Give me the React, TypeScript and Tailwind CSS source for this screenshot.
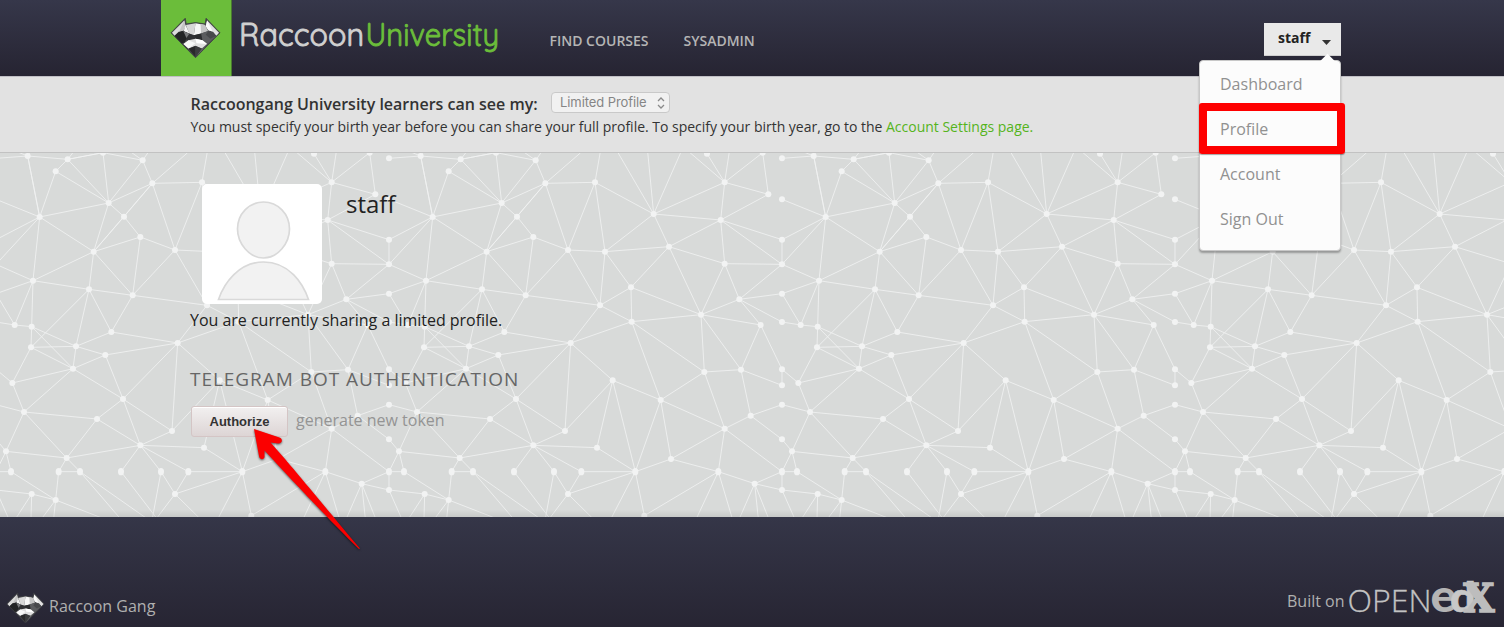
import React from "react";

/* Mesh nodes of one background tile, three units per pixel. */
const NODES: Record<string, [number, number]> = {
  a: [92, 18], b: [212, 28], c: [318, 8], d: [437, 31], e: [176, 64], f: [335, 159],
  g: [466, 100], h: [615, 97], i: [128, 201], j: [381, 200], k: [430, 261], l: [290, 305],
  m: [534, 300], n: [645, 305], o: [791, 192], p: [837, 290], q: [992, 210], r: [1004, 97],
  s: [1135, 133], t: [1176, 148], u: [1176, 25], v: [1118, 8], w: [951, 11], x: [1176, 269],
  y: [1176, 343], z: [1004, 341], A: [723, 412], B: [630, 466], C: [407, 436], D: [276, 418],
  E: [108, 392], F: [725, 515], G: [933, 494], H: [1048, 448], I: [1176, 431], J: [1176, 516],
  K: [1112, 525], L: [53, 525], M: [104, 530], N: [102, 592], O: [237, 589], P: [343, 546],
  Q: [325, 615], R: [228, 656], S: [542, 579], T: [668, 691], U: [812, 750], V: [943, 666],
  W: [1053, 659], X: [1176, 658], Y: [1176, 706], Z: [1176, 764], AA: [1082, 797],
  AB: [1004, 836], AC: [1176, 868], AD: [378, 747], AE: [300, 807], AF: [81, 786],
  AG: [46, 699], AH: [525, 843], AI: [621, 893], AJ: [430, 886], AK: [209, 924], AL: [27, 904],
  AM: [42, 965], AN: [185, 965], AO: [249, 965], AP: [372, 965], AQ: [492, 965],
  AR: [574, 965], AS: [736, 965], AT: [843, 927], AU: [985, 965], AV: [1176, 965],
  AW: [1094, 1001], AX: [1176, 1020], AY: [534, 1032], AZ: [104, 1032], BA: [176, 1050],
  BB: [763, 1097],
};

/* Chains of nodes; "<" marks a node of the tile to the left. */
const CHAINS = [
  "u< a b c", "d g h", "a i e b f", "e f g", "c b", "i f l i", "t< i", "x< i", "y< i", "i E l",
  "f j k m n p z y", "g j", "j l k", "g l", "g m C l", "k C", "h m", "h n B", "n A", "h o",
  "o r v", "w r s", "r q s", "o q x", "q y", "q z", "o p q", "x y", "c f", "d f", "o n",
  "p A G p", "B m", "A B F G H I", "A F", "z G", "z H y", "H J", "H K G", "G W V G", "K W",
  "K X Y", "E D C B S F", "y< E", "I< E L", "E M", "l D", "D N", "D P C", "D O R Q S P O Q",
  "Q AD S", "S T U F V U", "M O N R AD", "AF AE AD", "M N AG R", "M R", "I< L M", "J< L",
  "AG AF AL AK AJ AI AS", "X< AG", "Z< AF AK AE AJ AD AH AJ", "AF R", "S AH T AS U AT AS", "T AI",
  "U AB AT AU AB V", "W AA AB AV", "W Y", "AA Z", "AA AC", "AC< AL AM AV<", "AK AN AO AK", "AN BA",
  "AJ AP", "AJ AQ AY", "AJ AR AY AS AR", "AU AW AV AX AW", "AX< AZ BA", "AU BB", "AL AV<", "AM BA",
];

const OUTER =
  "M92 18L100 5M92 18L60 5M212 28L230 5M437 31L400 5M437 31L455 5M466 100L572 8M615 97L631 5M791 192L684 8M791 192L773 5M791 192L872 8M1004 97L900 8M1004 97L1018 5M1118 8L1150 0M1118 8L1135 133M92 18L128 201M437 31L318 8M176 1050L320 1106M176 1050L170 1106M176 1050L134 1106M104 1032L102 1106M104 1032L56 1106M249 965L370 1106M249 965L450 1106M372 965L480 1106M492 965L466 1106M534 1032L478 1106M534 1032L609 1106M736 965L663 1106M736 965L763 1097M985 965L919 1106M985 965L1027 1106M1094 1001L1048 1106M1094 1001L1105 1106M1094 1001L1136 1106M-3 1020L35 1106";

function chainPath(chain: string) {
  return chain
    .split(" ")
    .map((key, index) => {
      const left = key.endsWith("<");
      const [px, py] = NODES[left ? key.slice(0, -1) : key];
      return `${index ? "L" : "M"}${left ? px - 1179 : px} ${py}`;
    })
    .join("");
}

const MESH = CHAINS.map(chainPath).join("") + OUTER;

function MeshBackground() {
  return (
    <svg className="absolute inset-0 size-full" viewBox="0 153 1504 364" preserveAspectRatio="none">
      <defs>
        <g id="tile">
          <path d={MESH} fill="none" stroke="#f0f1f1" strokeWidth="2.600" />
          {Object.entries(NODES).map(([key, [cx, cy]]) => (
            <ellipse key={key} cx={cx} cy={cy} rx="9" ry={cy === 965 ? 11 : 9} fill="#f2f3f3" />
          ))}
        </g>
      </defs>
      {[-3, 390, 783, 1176].map((left) => (
        <use key={left} href="#tile" transform={`translate(${left} 150) scale(.33333)`} />
      ))}
    </svg>
  );
}

function Raccoon({ className }: { className: string }) {
  return (
    <svg viewBox="62 50 154 128" className={className}>
      <path d="M65 100L108 56L111 73L139 69L168 73L171 56L213 100L139 175Z" fill="#47484b" stroke="#3d3f42" strokeWidth="2.500" strokeLinejoin="round" />
      <path d="M68 100L105 63L109 80L102 93L88 97L76 109Z" fill="#dcdcdc" />
      <path d="M105 63L109 80L102 93L90 96Z" fill="#c4c4c4" />
      <path d="M210 100L174 63L170 80L178 92L192 97L202 109Z" fill="#e2e2e2" />
      <path d="M174 63L170 80L178 92L191 96Z" fill="#fafafa" />
      <path d="M110 76L139 71L134 107L120 102Z" fill="#d8d8d8" />
      <path d="M109 76L121 103L103 95Z" fill="#f6f6f6" />
      <path d="M139 71L168 76L156 102L134 107Z" fill="#f7f7f7" />
      <path d="M154 73L168 76L177 94L156 102Z" fill="#c5c5c5" />
      <path d="M76 109L88 98L102 94L121 103L106 128L98 132Z" fill="#232426" />
      <path d="M102 94L121 103L112 116Z" fill="#77787b" />
      <path d="M121 103L134 107L141 119L118 123L109 120Z" fill="#303134" />
      <path d="M134 107L156 102L168 107L160 122L141 119Z" fill="#2b2c2e" />
      <path d="M156 102L178 94L202 109L174 135L160 122Z" fill="#5b5c5f" />
      <path d="M178 94L202 109L184 118L170 106Z" fill="#47484b" />
      <path d="M103 134L118 122L139 118L160 122L174 134L158 147L139 139L118 147Z" fill="#e0e0e0" />
      <path d="M139 118L160 122L174 134L142 131Z" fill="#fff" />
      <path d="M103 134L118 122L139 131L118 147Z" fill="#f8f8f8" />
      <path d="M118 148L139 140V173Z" fill="#29292b" />
      <path d="M139 140L159 148L139 173Z" fill="#3b3c3e" />
      <path d="M159 148L172 137L140 173Z" fill="#77787a" />
    </svg>
  );
}

function Header() {
  return (
    <header className="flex h-[76px] bg-linear-to-b from-[#36374a] to-[#262432] pl-[161px]">
      <div className="flex w-[71px] items-start border-r border-[#4a7a30] bg-[#6bbd3a] pt-[16px] pl-[9px]">
        <Raccoon className="h-[43px] w-[51px]" />
      </div>
      <svg className="h-[76px] w-[270px]" viewBox="232 0 270 76" fontFamily="Quicksand, Lato, sans-serif" fontSize="32" strokeWidth="0.900">
        <text x="239" y="46" textLength="125" lengthAdjust="spacingAndGlyphs" fill="#d0d0d0" stroke="#d0d0d0">Raccoon</text>
        <text x="365.500" y="46" textLength="133.500" lengthAdjust="spacingAndGlyphs" fill="#6bbd3a" stroke="#6bbd3a">University</text>
      </svg>
      <nav className="flex gap-[35px] pt-[31px] pl-[47.500px] text-[14px] leading-5 font-semibold whitespace-nowrap text-[#b5b5b5]">
        <a className="w-[99px]">FIND COURSES</a>
        <a>SYSADMIN</a>
      </nav>
      <div className="mt-[23px] mr-[163px] ml-auto flex h-[33px] w-[77px] border-b border-[#cfcfcf] bg-[#e9e9e9] pl-[14px] text-[14px] leading-[30px] font-bold text-[#222]">
        staff
        <svg className="mt-[17px] ml-[11.500px] h-[5px] w-[9px]" viewBox="0 0 9 5">
          <path d="M0 0H9L4.500 5Z" fill="#333" />
        </svg>
      </div>
    </header>
  );
}

function PrivacyBar() {
  return (
    <section className="h-[77px] border-y border-t-[#c0bfc5] border-b-[#c2c2c2] bg-[#e2e2e2] pt-[15px] pl-[190.500px] text-[#333]">
      <div className="flex h-[22px] whitespace-nowrap">
        <span className="w-[360.500px] text-[16px] leading-6 font-semibold">Raccoongang University learners can see my:</span>
        <div className="flex h-[21px] w-[119px] items-center justify-between rounded-[4px] border border-[#c9c9c9] bg-[#f1f1f1] pr-1 pl-[8px] font-[Inter] text-[13px] tracking-[-0.080px] text-[#858585]">
          <span>Limited Profile</span>
          <svg className="h-[12px] w-[8px]" viewBox="0 0 8 12" fill="none" stroke="#8a8a8a" strokeWidth="1.300">
            <path d="M1 4L4 1L7 4M1 8L4 11L7 8" />
          </svg>
        </div>
      </div>
      <p className="pt-[3px] text-[14px] leading-5 tracking-[-0.015px] whitespace-nowrap">
        You must specify your birth year before you can share your full profile. To specify your birth year, go to the{" "}
        <a className="text-[#55b41c]">Account Settings page.</a>
      </p>
    </section>
  );
}

function Profile() {
  return (
    <main className="relative h-[364px] overflow-hidden bg-[#d8dad9]">
      <MeshBackground />
      <div className="relative h-full bg-linear-to-b from-transparent from-98% to-black/8 pl-[190px]">
        <div className="flex pt-[31px] pl-3">
          <svg className="size-[120px] rounded-[5px] bg-white" viewBox="0 0 120 120">
            <path d="M61.500 18C76 18 87.500 30 87.500 45C87.500 59 76 74 61.500 74C47 74 35.500 59 35.500 45C35.500 30 47 18 61.500 18Z" fill="#f2f2f2" stroke="#d9d9d9" strokeWidth="1.700" />
            <path d="M16.500 115.500C22 99 37 78 61.500 78C87 78 101 99 106.500 115.500Z" fill="#f2f2f2" stroke="#d9d9d9" strokeWidth="1.700" />
          </svg>
          <h1 className="pl-[24px] text-[24px] leading-10 text-[#222]">staff</h1>
        </div>
        <p className="pt-1 text-[16px] leading-6 tracking-[-0.020px] text-[#222]">You are currently sharing a limited profile.</p>
        <h2 className="pt-[35px] text-[19px] leading-6 tracking-[0.960px] text-[#666]">TELEGRAM BOT AUTHENTICATION</h2>
        <div className="flex items-start pt-[15px] pl-px">
          <button className="h-[31px] w-[97px] rounded-[3px] border border-[#d4c5c5] bg-linear-to-b from-[#f2f0f0] to-[#ddd5d5] font-['Liberation_Sans'] text-[13px] font-bold text-[#333] shadow-[inset_0_1px_0_#fff]">
            Authorize
          </button>
          <span className="mt-[2px] pl-[8px] text-[16px] leading-6 whitespace-nowrap text-[#949494]">generate new token</span>
        </div>
      </div>
    </main>
  );
}

function Footer() {
  return (
    <footer className="flex h-[110px] justify-between bg-linear-to-b from-[#353648] to-[#272533] text-[16px] whitespace-nowrap text-[#b0b0b0]">
      <div className="flex pt-[74px] pl-[6px]">
        <Raccoon className="h-[33px] w-[39px]" />
        <span className="pt-[3px] pl-1 leading-6">Raccoon Gang</span>
      </div>
      <div className="flex pt-[62px] pr-[6px]">
        <span className="w-[61px] pt-[10px] leading-6">Built on</span>
        <svg className="h-[48px] w-[150px]" viewBox="1348 579 150 48">
          <text x="1347.500" y="612" textLength="84" lengthAdjust="spacingAndGlyphs" fontFamily="Open Sans" fontWeight="300" fontSize="32" fill="#c2c2c2" stroke="#c2c2c2" strokeWidth="0.300">OPEN</text>
          <text x="1430.500" y="612" textLength="26" lengthAdjust="spacingAndGlyphs" fontFamily="Lato" fontWeight="900" fontSize="46" fill="#b4b4b4">e</text>
          <text x="1450" y="612" textLength="26" lengthAdjust="spacingAndGlyphs" fontFamily="Lato" fontWeight="900" fontSize="41" fill="#c8c8c8" stroke="#c8c8c8" strokeWidth="0.600">d</text>
          <text x="1463.500" y="611.500" textLength="31" lengthAdjust="spacingAndGlyphs" fontFamily="DejaVu Serif" fontWeight="700" fontSize="38.500" fill="#bdbdbd" stroke="#bdbdbd" strokeWidth="1.600">X</text>
        </svg>
      </div>
    </footer>
  );
}

function UserMenu() {
  return (
    <div className="absolute top-[60px] left-[1199px] h-[191px] w-[142px] rounded-[4px] border border-[#c8c8c8] bg-[#fcfcfc] px-[20px] pt-px text-[16px] text-[#919191] shadow-[0_2px_2px_rgba(0,0,0,0.3)]">
      <span className="absolute -top-[5px] left-[121.500px] size-[11px] rotate-45 bg-[#fcfcfc]" />
      {["Dashboard", "Profile", "Account", "Sign Out"].map((label) => (
        <div key={label} className="h-[45px] leading-[45px] whitespace-nowrap">{label}</div>
      ))}
      <div className="absolute top-[42px] -left-px h-[51px] w-[146px] rounded-[3px] border-8 border-[#fe0000] shadow-[0_1px_1px_rgba(0,0,0,0.35)]" />
    </div>
  );
}

function Arrow() {
  return (
    <svg className="absolute top-[420px] left-[240px] h-[140px] w-[130px] drop-shadow-[0_1px_1px_rgba(0,0,0,0.6)]" viewBox="240 420 130 140">
      <path d="M254 429L279.500 437.500C283.500 439 282 444 278 443.500L270.500 442.500C291 465 339 524 360 548.500L359 549C330 521 289 477 264.500 450.500L264.500 457C264 460 259.500 460 259 456Z" fill="#fb0000" />
    </svg>
  );
}

export default function App() {
  return (
    <div className="relative h-[627px] w-[1504px] overflow-hidden font-['Open_Sans',sans-serif]">
      <Header />
      <PrivacyBar />
      <Profile />
      <Footer />
      <UserMenu />
      <Arrow />
    </div>
  );
}
